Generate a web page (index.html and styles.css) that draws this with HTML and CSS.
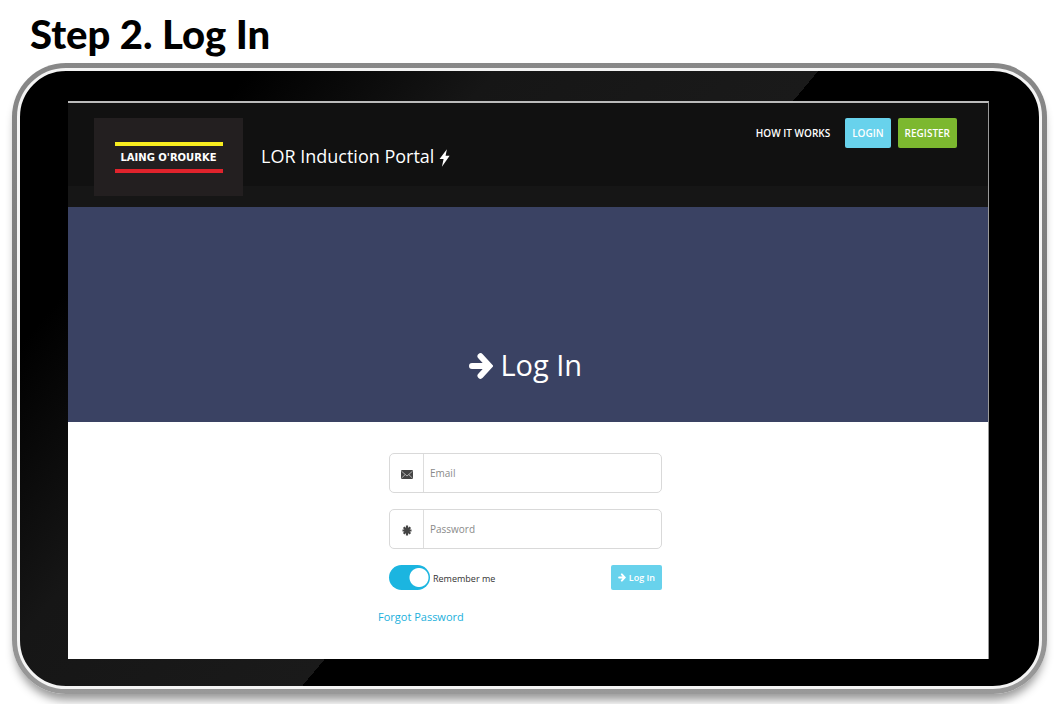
FILE: index.html
```
<!DOCTYPE html>
<html lang="en">

<head>
    <meta charset="UTF-8">
    <title>LOR Induction Portal</title>
    <link rel="stylesheet" href="styles.css">
</head>

<body>

    <h1 class="step">Step 2. Log In</h1>

    <div class="tablet">
        <div class="bezel">
            <div class="screen">

                <header class="topbar">
                    <div class="logo"><span>LAING O'ROURKE</span></div>
                    <p class="brand">LOR Induction Portal
                        <svg class="bolt" viewBox="0 0 12 20" aria-hidden="true"><path d="M8.6 0.5L0.6 11.2H5L3.2 19.5 11.6 7.6H7.2z"/></svg>
                    </p>
                    <nav>
                        <a class="how" href="#">HOW IT WORKS</a>
                        <a class="btn login" href="#">LOGIN</a>
                        <a class="btn register" href="#">REGISTER</a>
                    </nav>
                </header>

                <section class="hero">
                    <h2>
                        <svg class="arrow" viewBox="0 0 24 28" aria-hidden="true"><path d="M3 14H19M11.5 4.2L20.5 14 11.5 23.8"/></svg>
                        Log In
                    </h2>
                </section>

                <form>
                    <div class="field">
                        <label for="email" aria-label="Email">
                            <svg class="mail" viewBox="0 0 12 9" aria-hidden="true"><rect width="12" height="9" rx="1"/><path d="M.5 1.2L6 6 11.5 1.2M.6 8L4.2 4.6M11.4 8L7.8 4.6"/></svg>
                        </label>
                        <input type="email" id="email" placeholder="Email">
                    </div>
                    <div class="field">
                        <label for="password" aria-label="Password">
                            <svg class="star" viewBox="0 0 10 11" aria-hidden="true"><path d="M5 .5v10M.5 5.5h9M1.7 2.2l6.6 6.6M8.3 2.2L1.7 8.8"/></svg>
                        </label>
                        <input type="password" id="password" placeholder="Password">
                    </div>
                    <div class="actions">
                        <input type="checkbox" class="switch" id="remember" checked>
                        <label for="remember">Remember me</label>
                        <button type="submit">
                            <svg class="arrow" viewBox="0 0 24 28" aria-hidden="true"><path d="M3 14H19M11.5 4.2L20.5 14 11.5 23.8"/></svg>
                            Log In
                        </button>
                    </div>
                    <a class="forgot" href="#">Forgot Password</a>
                </form>

            </div>
        </div>
    </div>

</body>

</html>
```

FILE: styles.css
```
* {
    box-sizing: border-box;
}

body {
    margin: 0;
    background-color: #fff;
    font-family: "Open Sans", sans-serif;
}

.step {
    margin: 0;
    padding: 10px 30px 5px;
    font-family: "Century Gothic", Lato, sans-serif;
    font-size: 40px;
    font-weight: 900;
    line-height: 48px;
    color: #000;
}

/* tablet */

.tablet {
    margin: 0 13px 10px 12px;
    padding: 5px;
    border-radius: 54px;
    background: linear-gradient(#888, #777 50%, #999);
    box-shadow: 0 9px 10px -3px #999;
}

.bezel {
    padding: 30px 50px 27px 48px;
    border: 3px solid #f4f4f4;
    border-radius: 49px;
    background: linear-gradient(130deg, #000 15%, #161616 31%, #1a1a1a 52%, #000 52%);
}

.screen {
    min-height: 558px;
    border-top: 2px solid #bbb;
    border-right: 1px solid #999;
    background-color: #fff;
}

/* header */

.topbar {
    display: flex;
    align-items: flex-start;
    height: 104px;
    padding: 15px 31px 0 26px;
    background: linear-gradient(#111 80%, #161616 80%);
    color: #fff;
}

.logo {
    display: flex;
    align-items: center;
    justify-content: center;
    width: 149px;
    height: 78px;
    background-color: #231f20;
}

.logo span {
    width: 108px;
    border-top: 4px solid #f8ec1f;
    border-bottom: 4px solid #e0232c;
    font-family: "DejaVu Sans", sans-serif;
    font-size: 10px;
    font-weight: bold;
    line-height: 23px;
    text-align: center;
    white-space: nowrap;
}

.brand {
    margin: 24px 0 0 18px;
    font-size: 18px;
    line-height: 28px;
    white-space: nowrap;
}

.bolt {
    width: 11px;
    height: 20px;
    vertical-align: -5px;
    fill: #fff;
}

nav {
    display: flex;
    align-items: center;
    gap: 7px;
    margin-left: auto;
    font-size: 10px;
    font-weight: 600;
    line-height: 30px;
}

nav a {
    color: #fff;
    text-decoration: none;
}

.how {
    margin-right: 8px;
}

.btn {
    padding: 0 7px;
    border-radius: 2px;
}

.login {
    background-color: #68d2ec;
}

.register {
    background-color: #7cb82f;
}

/* hero */

.hero {
    display: flex;
    align-items: flex-end;
    justify-content: center;
    height: 215px;
    padding: 0 5px 35px 0;
    background-color: #3a4263;
    color: #fff;
}

.hero h2 {
    margin: 0;
    font-size: 29px;
    font-weight: 400;
    line-height: 44px;
}

.arrow {
    fill: none;
    stroke: currentColor;
    stroke-width: 6;
    stroke-linecap: round;
}

.hero .arrow {
    width: 24px;
    height: 28px;
    vertical-align: -4px;
}

/* login form */

form {
    width: 278px;
    margin: 0 auto;
    padding: 31px 5px 0 0;
}

.field {
    display: flex;
    height: 40px;
    margin-bottom: 16px;
    border: 1px solid #d9d9d9;
    border-radius: 5px;
}

.field label {
    display: flex;
    align-items: center;
    justify-content: center;
    width: 34px;
    padding-top: 3px;
    border-right: 1px solid #ddd;
}

.field input {
    flex: 1;
    min-width: 0;
    padding: 0 6px;
    border: 0;
    background: none;
    font-family: inherit;
    font-size: 10px;
    color: #444;
}

.field input::placeholder {
    color: #8a8a8a;
}

.mail {
    width: 12px;
    height: 9px;
    fill: #444;
}

.mail path {
    fill: none;
    stroke: #ddd;
    stroke-width: 0.7;
}

.star {
    width: 10px;
    height: 11px;
    stroke: #444;
    stroke-width: 2.2;
}

.actions {
    display: flex;
    align-items: center;
    height: 24px;
    font-size: 9px;
    color: #333;
}

.switch {
    appearance: none;
    width: 41px;
    height: 25px;
    margin: 0 3px 0 0;
    border-radius: 13px;
    background: radial-gradient(circle at 30px 50%, #fff 9px, #1bb5e0 10px);
}

.actions label {
    padding-top: 2px;
}

button {
    margin-left: auto;
    padding: 0 7px;
    border: 0;
    border-radius: 2px;
    background-color: #68d2ec;
    font-family: inherit;
    font-size: 9px;
    font-weight: 600;
    line-height: 25px;
    color: #fff;
}

button .arrow {
    width: 8px;
    height: 9px;
    vertical-align: -1px;
}

.forgot {
    display: inline-block;
    margin: 19px 0 0 -11px;
    font-size: 11px;
    line-height: 18px;
    color: #1bb0dc;
    text-decoration: none;
}
```
